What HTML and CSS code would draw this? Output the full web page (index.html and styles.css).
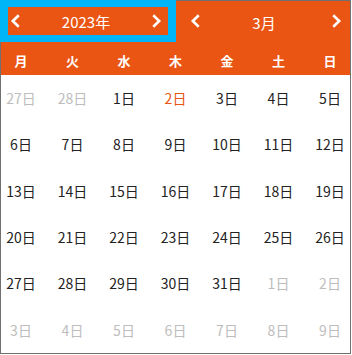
FILE: index.html
```html
<!DOCTYPE html>
<html lang="ja">
<head>
<meta charset="utf-8">
<title>Calendar</title>
<link rel="stylesheet" href="styles.css">
</head>
<body>
<div class="calendar">
  <div class="header">
    <div class="year-cell">
      <div class="year-box">
        <svg class="chev" viewBox="0 0 8 12" width="8" height="12"><polyline points="6.8,1.2 1.8,6 6.8,10.8"/></svg>
        <span class="label">2023年</span>
        <svg class="chev" viewBox="0 0 8 12" width="8" height="12"><polyline points="1.2,1.2 6.2,6 1.2,10.8"/></svg>
      </div>
    </div>
    <div class="month-cell">
      <svg class="chev" viewBox="0 0 8 12" width="8" height="12"><polyline points="6.8,1.2 1.8,6 6.8,10.8"/></svg>
      <span class="label">3月</span>
      <svg class="chev" viewBox="0 0 8 12" width="8" height="12"><polyline points="1.2,1.2 6.2,6 1.2,10.8"/></svg>
    </div>
  </div>
  <div class="weekdays">
    <span>月</span><span>火</span><span>水</span><span>木</span><span>金</span><span>土</span><span>日</span>
  </div>
  <div class="days">
    <span class="muted">27日</span><span class="muted">28日</span><span>1日</span><span class="today">2日</span><span>3日</span><span>4日</span><span>5日</span>
    <span>6日</span><span>7日</span><span>8日</span><span>9日</span><span>10日</span><span>11日</span><span>12日</span>
    <span>13日</span><span>14日</span><span>15日</span><span>16日</span><span>17日</span><span>18日</span><span>19日</span>
    <span>20日</span><span>21日</span><span>22日</span><span>23日</span><span>24日</span><span>25日</span><span>26日</span>
    <span>27日</span><span>28日</span><span>29日</span><span>30日</span><span>31日</span><span class="muted">1日</span><span class="muted">2日</span>
    <span class="muted">3日</span><span class="muted">4日</span><span class="muted">5日</span><span class="muted">6日</span><span class="muted">7日</span><span class="muted">8日</span><span class="muted">9日</span>
  </div>
</div>
</body>
</html>
```
FILE: styles.css
```css
html, body {
  margin: 0;
  padding: 0;
  background: #fff;
}

.calendar {
  width: 349px;
  height: 352px;
  border: 1px solid #707070;
  font-family: "Noto Sans CJK JP", "Noto Sans", sans-serif;
  display: flex;
  flex-direction: column;
}

.header {
  display: flex;
  height: 41px;
  background: #ea5514;
  color: #fff;
}

.year-cell {
  margin: -1px 0 0 -1px;
  width: 176px;
  height: 42px;
  box-sizing: border-box;
  padding: 7px 8px 8px 8px;
  background: #00b4f8;
}

.year-box {
  height: 27px;
  background: #ea5514;
  display: flex;
  align-items: center;
  justify-content: space-between;
  padding: 0 7px 1px 3px;
}

.month-cell {
  flex: 1;
  display: flex;
  align-items: center;
  justify-content: space-between;
  padding: 0 9px 1px 15px;
}

.label {
  font-size: 15px;
  line-height: 1;
  padding-top: 2px;
}

.month-cell .label {
  margin-right: 4px;
}

.chev {
  display: block;
  fill: none;
  stroke: #fff;
  stroke-width: 2.6;
  stroke-linecap: square;
  overflow: visible;
}

.weekdays {
  height: 33px;
  box-sizing: border-box;
  padding-top: 4px;
  background: #ea5514;
  color: #fff;
  font-size: 13px;
  font-weight: 700;
  display: grid;
  grid-template-columns: repeat(7, 40px);
  justify-content: space-between;
  align-items: center;
}

.weekdays span,
.days span {
  text-align: center;
}

.days {
  flex: 1;
  display: grid;
  grid-template-columns: repeat(7, 40px);
  grid-template-rows: repeat(6, 1fr);
  justify-content: space-between;
  align-items: center;
  font-size: 14px;
  color: #222;
}

.days .muted {
  color: #bdbdbd;
}

.days .today {
  color: #ea5514;
}
```
